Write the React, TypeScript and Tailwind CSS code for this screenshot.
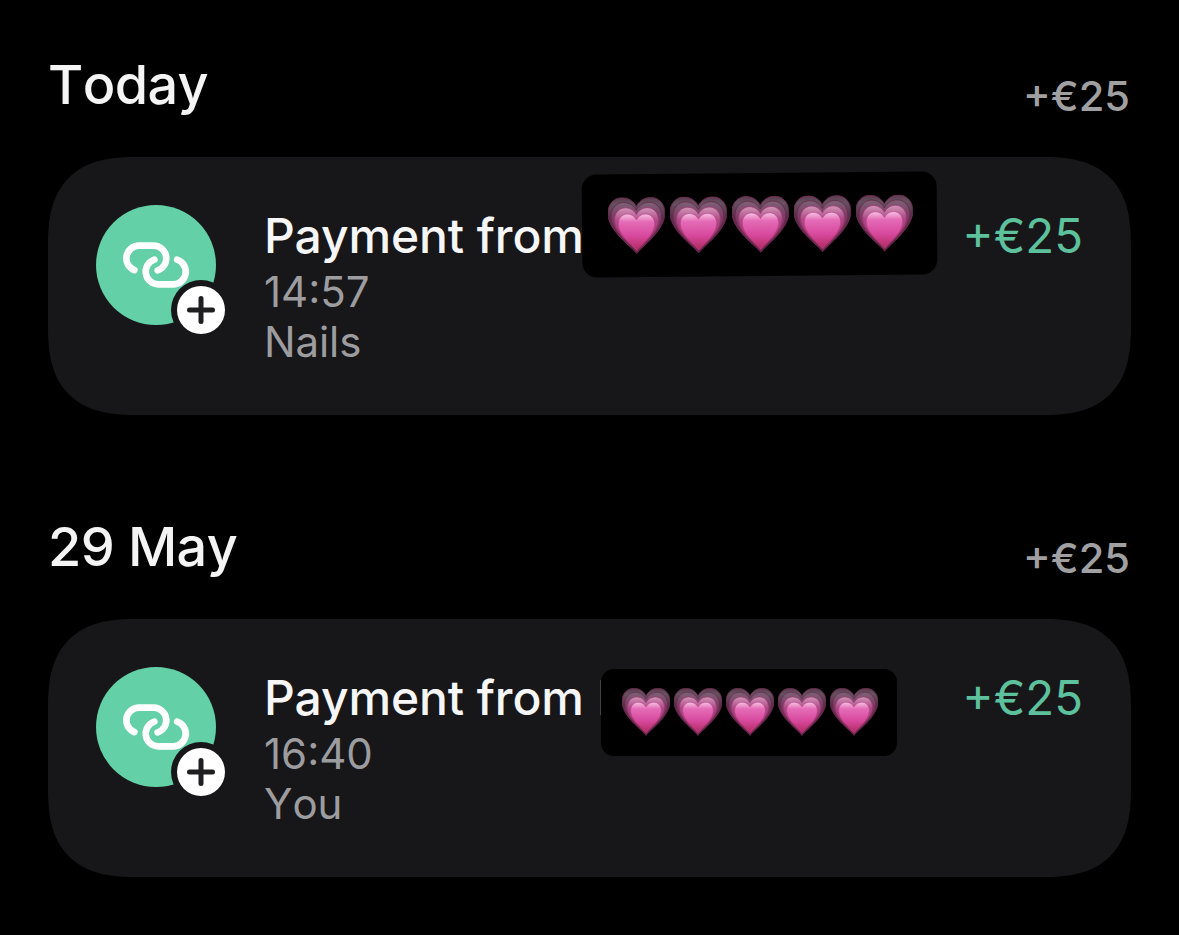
import type { ReactNode } from 'react';

const HEART =
  'M110 206C96 186 24 138 24 84C24 56 43 37 67 37C88 37 103 50 110 64C117 50 132 37 153 37C177 37 196 56 196 84C196 138 124 186 110 206Z';

function GradientDefs() {
  return (
    <svg className="absolute h-0 w-0" aria-hidden="true">
      <defs>
        <linearGradient id="heart-1" x1="0" y1="0" x2="0" y2="1">
          <stop offset="0" stopColor="#5d3c50" />
          <stop offset="0.12" stopColor="#655260" />
          <stop offset="0.35" stopColor="#5a3049" />
          <stop offset="0.65" stopColor="#6f2650" />
          <stop offset="1" stopColor="#611638" />
        </linearGradient>
        <linearGradient id="heart-2" x1="0" y1="0" x2="0" y2="1">
          <stop offset="0" stopColor="#7c6275" />
          <stop offset="0.3" stopColor="#7d3c65" />
          <stop offset="1" stopColor="#84204e" />
        </linearGradient>
        <linearGradient id="heart-3" x1="0" y1="0" x2="0" y2="1">
          <stop offset="0" stopColor="#d096b8" />
          <stop offset="0.3" stopColor="#ad4a87" />
          <stop offset="1" stopColor="#9c245a" />
        </linearGradient>
        <linearGradient id="heart-4" x1="0" y1="0" x2="0" y2="1">
          <stop offset="0" stopColor="#f6c4e4" />
          <stop offset="0.22" stopColor="#e46cb6" />
          <stop offset="0.6" stopColor="#d84a9f" />
          <stop offset="1" stopColor="#b42a60" />
        </linearGradient>
      </defs>
    </svg>
  );
}

function GrowingHeart({ className }: { className: string }) {
  return (
    <svg viewBox="24 36 172 172" className={className}>
      <path d={HEART} fill="url(#heart-1)" stroke="#6e2950" strokeWidth="3" />
      <path
        d={HEART}
        transform="translate(110 202) scale(.89) translate(-110 -206)"
        fill="url(#heart-2)"
        stroke="#6a2a50"
        strokeWidth="3"
      />
      <path
        d={HEART}
        transform="translate(110 198) scale(.77) translate(-110 -206)"
        fill="url(#heart-3)"
        stroke="#a03a74"
        strokeWidth="3"
      />
      <path
        d={HEART}
        transform="translate(110 195) scale(.64) translate(-110 -206)"
        fill="url(#heart-4)"
        stroke="#bb3f87"
        strokeWidth="3"
      />
    </svg>
  );
}

function Hearts({ className }: { className: string }) {
  return (
    <>
      {[0, 1, 2, 3, 4].map((i) => (
        <GrowingHeart key={i} className={className} />
      ))}
    </>
  );
}

function LinkAvatar() {
  return (
    <div className="relative size-[120px] shrink-0 rounded-full bg-[#63d0a7]">
      <svg viewBox="48 45 360 360" className="size-full" fill="none" stroke="#fff" strokeWidth="20" strokeLinecap="round">
        <path d="M163 240.3A38 38 0 0 1 177 167H221A38 38 0 0 1 233 241" />
        <path d="M223 209A38 38 0 0 0 235 283H279A38 38 0 0 0 291.5 209" />
      </svg>
      <div className="absolute -right-[15px] -bottom-[15px] flex size-[60px] items-center justify-center rounded-full bg-[#171719]">
        <div className="flex size-12 items-center justify-center rounded-full bg-white">
          <svg viewBox="0 0 28 28" className="size-7" stroke="#1f1f21" strokeWidth="5" strokeLinecap="round">
            <path d="M14 2.5V25.5M2.5 14H25.5" />
          </svg>
        </div>
      </div>
    </div>
  );
}

type DayProps = {
  date: string;
  time: string;
  note: string;
  children: ReactNode;
};

function Day({ date, time, note, children }: DayProps) {
  return (
    <section className="h-[462px] px-12">
      <header className="flex h-[157px] items-start justify-between">
        <h2 className="pt-[52px] text-[54px] leading-[65px] font-medium tracking-[-0.6px] text-[#f4f4f5] [font-kerning:none]">
          {date}
        </h2>
        <span className="pt-[71px] pr-px text-[41.6px] leading-[51px] font-medium text-[#a0a0a2]">+€25</span>
      </header>
      <div className="relative flex h-[258px] items-start rounded-[70px] bg-[#171719] p-12 supports-[corner-shape:squircle]:rounded-[90px] supports-[corner-shape:squircle]:[corner-shape:superellipse(1.4)]">
        <LinkAvatar />
        <div className="ml-12 grow">
          <h3 className="pt-0.5 text-[48px] leading-[58px] font-medium tracking-[-0.1px] text-[#f6f6f7]">Payment from</h3>
          <p className="mt-0.5 text-[42px] leading-[50px] text-[#9d9da0]">{time}</p>
          <p className="text-[42px] leading-[50px] tracking-[-0.1px] text-[#9d9da0] [font-kerning:none]">{note}</p>
        </div>
        <span className="pt-0.5 text-[47.4px] leading-[58px] text-[#5cc19c]">+€25</span>
        {children}
      </div>
    </section>
  );
}

export default function App() {
  return (
    <main className="h-[935px] w-[1179px] overflow-hidden bg-black font-['Inter',sans-serif]">
      <GradientDefs />
      <Day date="Today" time="14:57" note="Nails">
        <div className="absolute top-4 left-[534px] flex h-[103px] w-[355px] -rotate-[0.55deg] items-start justify-center gap-[5px] rounded-[15px] bg-black pt-[23px] pl-0.5">
          <Hearts className="size-[57px]" />
        </div>
      </Day>
      <Day date="29 May" time="16:40" note="You">
        <div className="absolute top-[61px] left-[552px] h-[35px] w-px bg-[#444446]" />
        <div className="absolute top-[50px] left-[553px] flex h-[87px] w-[296px] items-start justify-center gap-1 rounded-[13px] bg-black pt-[19px] pl-px">
          <Hearts className="size-12" />
        </div>
      </Day>
    </main>
  );
}
